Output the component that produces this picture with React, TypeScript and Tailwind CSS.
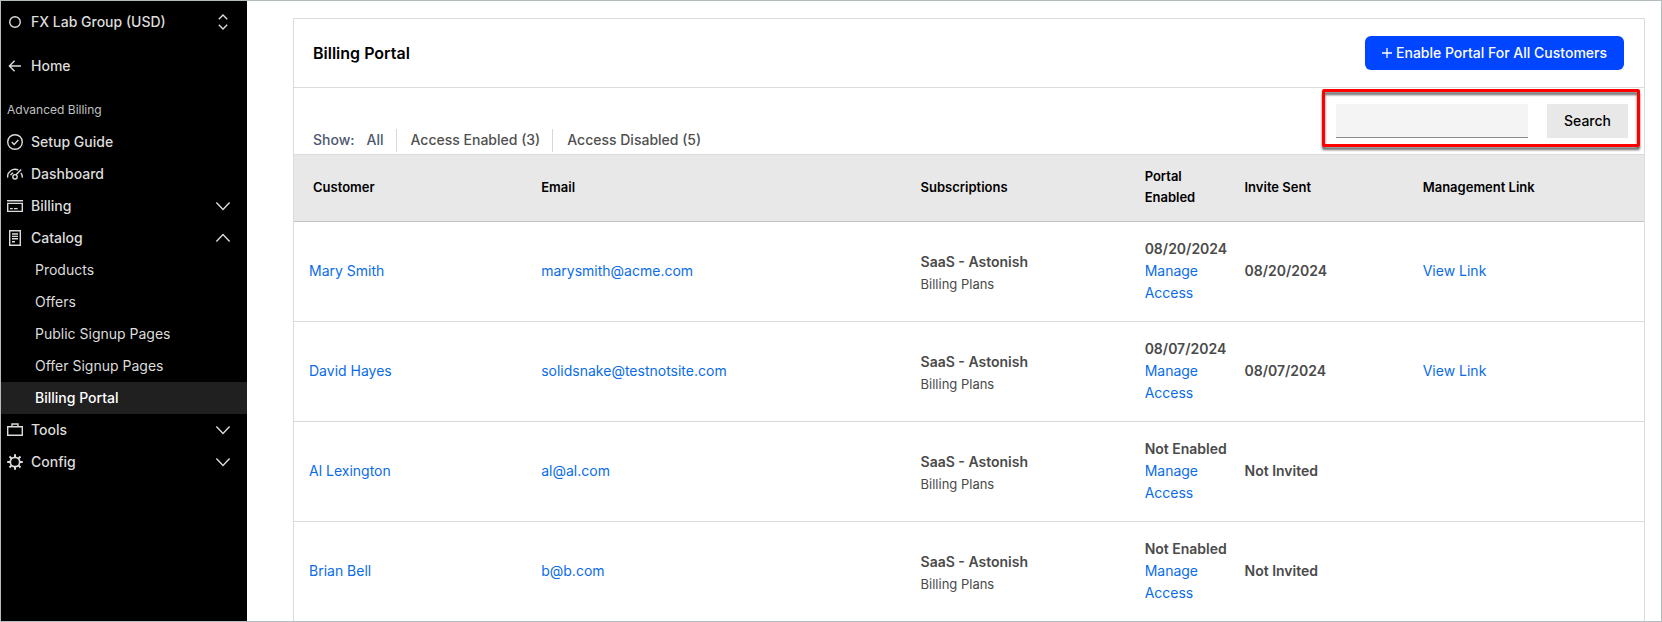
import type { ReactNode } from "react";

const icons = {
  circle: <circle cx="8" cy="8" r="5.3" />,
  back: <path d="M14 8H2.6M7.6 2.8 2.4 8l5.2 5.2" />,
  check: (
    <>
      <circle cx="8" cy="8" r="7.3" />
      <path d="m4.8 8.1 2.3 2.3 4.3-4.3" />
    </>
  ),
  gauge: (
    <>
      <path d="M.7 11.6A7.4 7.4 0 0 1 11.2 4M13.9 6.9a7.4 7.4 0 0 1 1.4 4.7M3.6 9.2a4.9 4.9 0 0 1 2.6-2.4M9 8.8l5.2-5.2" />
      <circle cx="8" cy="10.8" r="2.2" />
    </>
  ),
  card: (
    <>
      <path d="M0 2.8h16M.7 5.4h14.6v8H.7z" />
      <path d="M3 10.6h2.8M7 10.6h3.6" />
    </>
  ),
  doc: (
    <>
      <path d="M2.7.7h10.6v14.6H2.7z" />
      <path d="M5 4h6M5 6.4h6M5 8.8h6M5 11.8h3" />
    </>
  ),
  case: <path d="M.7 4.7h14.6v8.6H.7zM5 4.4V2h6v2.4" />,
  gear: (
    <>
      <circle cx="8" cy="8" r="4.7" strokeWidth="1.7" />
      <path
        strokeWidth="2"
        d="M8 .2v3M8 12.8v3M.2 8h3M12.8 8h3M2.5 2.5l2.1 2.1M11.4 11.4l2.1 2.1M2.5 13.5l2.1-2.1M11.4 4.6l2.1-2.1"
      />
    </>
  ),
  down: <path d="m1.4 4.6 6.6 6.8 6.6-6.8" />,
  up: <path d="M1.4 11.4 8 4.6l6.6 6.8" />,
  switcher: <path d="M3.8 5.2 8 1.1l4.2 4.1M3.8 10.8 8 14.9l4.2-4.1" />,
};

function Icon({ name }: { name: keyof typeof icons }) {
  return (
    <svg
      viewBox="0 0 16 16"
      className="size-4 shrink-0"
      fill="none"
      stroke="currentColor"
      strokeWidth="1.4"
      aria-hidden="true"
    >
      {icons[name]}
    </svg>
  );
}

function NavButton({
  icon,
  chevron,
  children,
}: {
  icon: keyof typeof icons;
  chevron: keyof typeof icons;
  children: ReactNode;
}) {
  return (
    <button
      type="button"
      aria-expanded={chevron === "up"}
      className="flex h-8 w-full items-center gap-2 pr-4 pl-1.5 text-left"
    >
      <Icon name={icon} />
      <span className="flex-1">{children}</span>
      <Icon name={chevron} />
    </button>
  );
}

function NavLink({ icon, children }: { icon: keyof typeof icons; children: ReactNode }) {
  return (
    <a href="#" className="flex h-8 items-center gap-2 pl-1.5">
      <Icon name={icon} />
      {children}
    </a>
  );
}

const catalog = ["Products", "Offers", "Public Signup Pages", "Offer Signup Pages", "Billing Portal"];

function Sidebar() {
  return (
    <nav className="w-[246px] shrink-0 bg-black pt-[5px] text-sm font-medium text-[#dcdcdc]">
      <button type="button" className="flex h-8 w-full items-center gap-2 pr-4 pl-1.5 text-left">
        <Icon name="circle" />
        <span className="flex-1">FX Lab Group (USD)</span>
        <Icon name="switcher" />
      </button>
      <div className="mt-3">
        <NavLink icon="back">Home</NavLink>
      </div>
      <h2 className="mt-[18px] mb-1.5 pl-1.5 text-xs leading-5 font-normal text-[#c0c0c0]">Advanced Billing</h2>
      <NavLink icon="check">Setup Guide</NavLink>
      <NavLink icon="gauge">Dashboard</NavLink>
      <NavButton icon="card" chevron="down">Billing</NavButton>
      <NavButton icon="doc" chevron="up">Catalog</NavButton>
      <ul>
        {catalog.map((label) => (
          <li key={label}>
            <a
              href="#"
              className={
                label === "Billing Portal"
                  ? "flex h-8 items-center bg-[#202020] pl-[34px] text-white"
                  : "flex h-8 items-center pl-[34px] font-normal"
              }
            >
              {label}
            </a>
          </li>
        ))}
      </ul>
      <NavButton icon="case" chevron="down">Tools</NavButton>
      <NavButton icon="gear" chevron="down">Config</NavButton>
    </nav>
  );
}

const customers = [
  { name: "Mary Smith", email: "marysmith@acme.com", enabled: "08/20/2024", invite: "08/20/2024", link: true },
  { name: "David Hayes", email: "solidsnake@testnotsite.com", enabled: "08/07/2024", invite: "08/07/2024", link: true },
  { name: "Al Lexington", email: "al@al.com", enabled: "Not Enabled", invite: "Not Invited", link: false },
  { name: "Brian Bell", email: "b@b.com", enabled: "Not Enabled", invite: "Not Invited", link: false },
];

function CustomerTable() {
  return (
    <table className="w-full table-fixed border-separate border-spacing-0 text-sm leading-[22px]">
      <thead className="bg-[#e8e8e8] text-left text-[13px] leading-[21px] text-black">
        <tr className="h-[68px] *:border-t *:border-b *:border-t-[#d9dbdd] *:border-b-[#c4c4c4] *:pb-0.5 *:font-semibold">
          <th className="w-[17.2%] pl-[19px]">Customer</th>
          <th className="w-[28.1%] pl-[15px]">Email</th>
          <th className="w-[16.6%] pl-[15px]">Subscriptions</th>
          <th className="w-[7.4%] pl-[15px]">Portal Enabled</th>
          <th className="w-[13.2%] pl-[15px]">Invite Sent</th>
          <th className="pl-[15px]">Management Link</th>
        </tr>
      </thead>
      <tbody className="text-[#4a4a4a]">
        {customers.map((c) => (
          <tr
            key={c.name}
            className="h-[100px] *:border-b *:border-[#d9d9d9] *:pb-0.5 *:pl-[15px] last:h-[99px] last:*:border-b-0"
          >
            <td><a href="#" className="text-[#0a6ce8]">{c.name}</a></td>
            <td><a href="#" className="text-[#0a6ce8]">{c.email}</a></td>
            <td>
              <div className="pt-1 font-semibold">SaaS - Astonish</div>
              <div className="text-[13px]">Billing Plans</div>
            </td>
            <td>
              <div className="font-semibold whitespace-nowrap">{c.enabled}</div>
              <a href="#" className="block text-[#0a6ce8]">Manage Access</a>
            </td>
            <td className="font-semibold">{c.invite}</td>
            <td>{c.link && <a href="#" className="text-[#0a6ce8]">View Link</a>}</td>
          </tr>
        ))}
      </tbody>
    </table>
  );
}

export default function App() {
  return (
    <div className="flex min-h-screen border border-[#b4bcbf] bg-white font-['Inter',sans-serif]">
      <Sidebar />
      <main className="min-w-0 flex-1 pt-[17px] pr-4 pl-[46px]">
        <section className="h-full border border-b-0 border-[#d9dbdd]">
          <header className="flex items-center justify-between border-b border-[#d9dbdd] py-[17px] pr-5 pl-[19px]">
            <h1 className="text-base font-semibold text-black">Billing Portal</h1>
            <button
              type="button"
              className="flex h-[34px] items-center gap-1 rounded-md bg-[#0045ff] px-[17px] text-sm font-medium text-white"
            >
              <svg viewBox="0 0 10 10" className="size-2.5" stroke="currentColor" strokeWidth="1.3" aria-hidden="true">
                <path d="M5 0v10M0 5h10" />
              </svg>
              Enable Portal For All Customers
            </button>
          </header>
          <div className="flex justify-between pr-4 pl-[19px]">
            <div className="mb-0.5 flex items-center self-end text-sm leading-[21px] font-medium text-[#505050] *:pb-0.5">
              <span className="mr-3 text-[#4c5870]">Show:</span>
              <a href="#" className="border-r border-[#d5d8da] pr-3 text-[#4c5870]">All</a>
              <a href="#" className="border-r border-[#d5d8da] pr-3 pl-3.5">Access Enabled (3)</a>
              <a href="#" className="pl-3.5">Access Disabled (5)</a>
            </div>
            <form className="relative my-4 flex gap-[19px]" onSubmit={(e) => e.preventDefault()}>
              <input
                type="text"
                aria-label="Search customers"
                className="h-[34px] w-48 border-b border-[#8a8a8a] bg-[#f4f4f4] px-3 text-sm outline-none"
              />
              <button type="submit" className="h-[34px] bg-[#e8e8e8] px-[17px] text-sm font-medium text-black">
                Search
              </button>
              <span className="pointer-events-none absolute -top-[15px] -right-3 -bottom-[9px] -left-3.5 rounded-xs border-3 border-[#ff0000] drop-shadow-[0_3px_1px_rgba(0,0,0,0.6)]" />
            </form>
          </div>
          <CustomerTable />
        </section>
      </main>
    </div>
  );
}
